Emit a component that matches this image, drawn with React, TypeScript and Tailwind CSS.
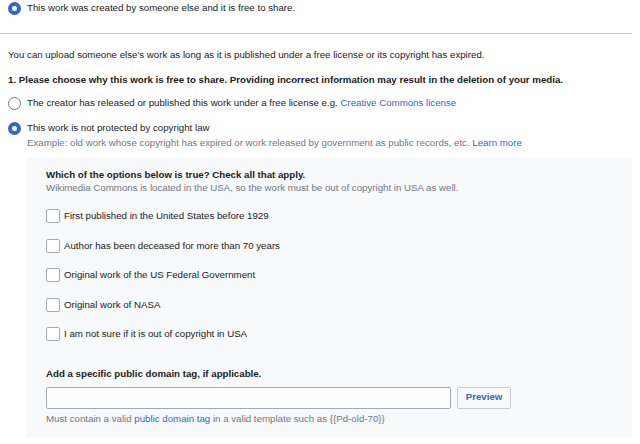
const Radio = ({ checked }: { checked: boolean }) => (
  <span
    className={
      checked
        ? "w-[13px] h-[13px] shrink-0 rounded-full border-[4px] border-[#36c] bg-white"
        : "w-[13px] h-[13px] shrink-0 rounded-full border border-[#72777d] bg-white"
    }
  ></span>
);

const Checkbox = ({ label }: { label: string }) => (
  <div className="h-[29.5px] flex items-center">
    <span className="w-[14px] h-[14px] shrink-0 border border-[#a2a9b1] rounded-[2px] bg-white"></span>
    <span className="ml-[4px] leading-[14px]">{label}</span>
  </div>
);

const App = () => {
  const options = [
    "First published in the United States before 1929",
    "Author has been deceased for more than 70 years",
    "Original work of the US Federal Government",
    "Original work of NASA",
    "I am not sure if it is out of copyright in USA",
  ];

  return (
    <div className="w-[640px] h-[444px] bg-white overflow-hidden font-['Liberation_Sans',Arial,sans-serif] text-[9.7px] text-[#202122]">
      <div className="w-[632px]">
        <div className="h-[17px] flex items-center pl-[8px]">
          <Radio checked />
          <span className="ml-[6px]">This work was created by someone else and it is free to share.</span>
        </div>

        <div className="mt-[16px] border-t border-[#c8ccd1]"></div>

        <p className="mt-[14px] pl-[8px] leading-[14px]">
          You can upload someone else's work as long as it is published under a free license or its copyright has expired.
        </p>

        <p className="mt-[11px] pl-[8px] leading-[14px] font-bold">
          1. Please choose why this work is free to share. Providing incorrect information may result in the deletion of your media.
        </p>

        <div className="mt-[9px] h-[14px] flex items-center pl-[8px]">
          <Radio checked={false} />
          <span className="ml-[6px]">
            The creator has released or published this work under a free license e.g.{" "}
            <span className="text-[#36c]">Creative Commons license</span>
          </span>
        </div>

        <div className="mt-[11px] h-[14px] flex items-center pl-[8px]">
          <Radio checked />
          <span className="ml-[6px]">This work is not protected by copyright law</span>
        </div>
        <p className="pl-[27px] mt-[1px] leading-[14px] text-[#72777d]">
          Example: old work whose copyright has expired or work released by government as public records, etc.{" "}
          <span className="text-[#36c]">Learn more</span>
        </p>

        <div className="mt-[8px] ml-[27px] h-[280px] bg-[#f8f9fa] pl-[19px] pt-[10px]">
          <p className="font-bold leading-[13px]">Which of the options below is true? Check all that apply.</p>
          <p className="leading-[14px] text-[#72777d]">
            Wikimedia Commons is located in the USA, so the work must be out of copyright in USA as well.
          </p>

          <div className="mt-[6.5px] flex flex-col">
            {options.map((o) => (
              <Checkbox key={o} label={o} />
            ))}
          </div>

          <p className="mt-[17.5px] font-bold leading-[14px]">Add a specific public domain tag, if applicable.</p>

          <div className="mt-[6px] flex items-center gap-[6px]">
            <div className="w-[405px] h-[22px] bg-white border border-[#a2a9b1] rounded-[2px]"></div>
            <button className="w-[54px] h-[22px] bg-[#f8f9fa] border border-[#c8ccd1] rounded-[2px] text-[#36c] font-bold">
              Preview
            </button>
          </div>

          <p className="mt-[3px] leading-[14px] text-[#72777d]">
            Must contain a valid <span className="text-[#36c]">public domain tag</span> in a valid template such as {"{{Pd-old-70}}"}
          </p>
        </div>
      </div>
    </div>
  );
};

export default App;
